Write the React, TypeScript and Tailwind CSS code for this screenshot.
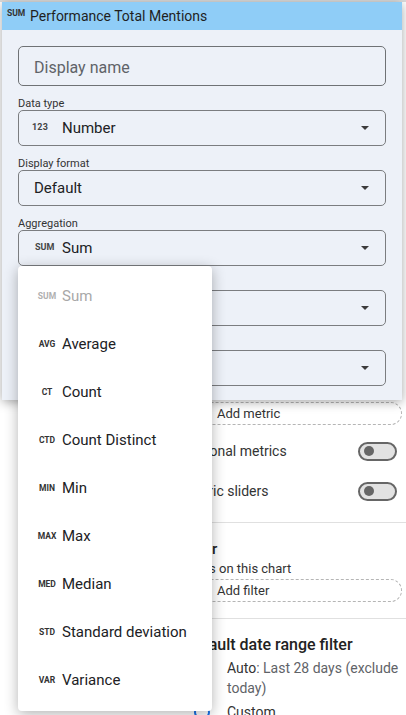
import React from "react";

const Arrow = () => (
  <svg width="8" height="4" viewBox="0 0 8 4" className="shrink-0">
    <path d="M0 0 L8 0 L4 4 Z" fill="#3c3c3c" />
  </svg>
);

const Toggle = () => (
  <div className="w-[39px] h-[19px] rounded-full border-2 border-[#666] bg-[#e2e2e2] flex items-center pl-[4px]">
    <div className="w-[10px] h-[10px] rounded-full bg-[#666]" />
  </div>
);

const Field = ({ label, children }: { label: string; children?: React.ReactNode }) => (
  <div className="flex flex-col mt-3">
    <div className="h-[12px] text-[11px] leading-[12px] text-[#333]">{label}</div>
    <div className="h-[36px] rounded-[5px] border border-[#7b7d80] flex items-center pr-[16px]">
      <div className="flex-1 flex items-center">{children}</div>
      <Arrow />
    </div>
  </div>
);

const items: [string, string][] = [
  ["SUM", "Sum"],
  ["AVG", "Average"],
  ["CT", "Count"],
  ["CTD", "Count Distinct"],
  ["MIN", "Min"],
  ["MAX", "Max"],
  ["MED", "Median"],
  ["STD", "Standard deviation"],
  ["VAR", "Variance"],
];

export default function App() {
  return (
    <div
      className="relative w-[406px] h-[715px] overflow-hidden bg-white"
      style={{ fontFamily: "Roboto, 'Noto Sans', sans-serif" }}
    >
      {/* top strip of the page underneath */}
      <div className="h-[2px] bg-[#dcdcdc]" />

      {/* background sidebar */}
      <div className="ml-[160px] flex flex-col pt-[400px]">
        <div className="pl-[24px] pr-[4px]">
          <div className="h-[23px] rounded-full border border-dashed border-[#b5b5b5] flex items-center pl-[10px] gap-[8px] text-[13px] text-[#333]">
            <span className="text-[14px] leading-none w-[14px] text-center">+</span>
            <span>Add metric</span>
          </div>
          <div className="mt-[6px] h-[40px] flex items-center justify-between pr-[5px] text-[14px] text-[#333]">
            <span>Optional metrics</span>
            <Toggle />
          </div>
          <div className="h-[40px] flex items-center justify-between pr-[5px] text-[14px] text-[#333]">
            <span>Metric sliders</span>
            <Toggle />
          </div>
        </div>
        <div className="mt-[11px] h-px bg-[#e0e0e0]" />
        <div className="pl-[20px] pr-[4px]">
          <div className="mt-[16px] ml-[3px] text-[15px] leading-[20px] font-medium text-[#222]">Filter</div>
          <div className="mt-[2px] text-[13px] leading-[16px] text-[#333]">Filters on this chart</div>
          <div className="mt-[2px] ml-[4px] h-[23px] rounded-full border border-dashed border-[#b5b5b5] flex items-center pl-[10px] gap-[8px] text-[13px] text-[#333]">
            <span className="text-[14px] leading-none w-[14px] text-center">+</span>
            <span>Add filter</span>
          </div>
        </div>
        <div className="mt-[16px] h-px bg-[#e0e0e0]" />
        <div className="pl-[24px] pr-[4px]">
          <div className="mt-[15px] text-[16px] leading-[22px] font-medium text-[#222]">Default date range filter</div>
          <div className="mt-[2px] flex items-start">
            <div className="ml-[8px] mt-[2px] w-[16px] h-[16px] rounded-full border-2 border-[#5f6368] shrink-0" />
            <div className="ml-[19px] text-[14px] leading-[20px] text-[#5f6368]">
              <span className="text-[#333]">Auto</span>: Last 28 days (exclude today)
            </div>
          </div>
          <div className="mt-[4px] flex items-start">
            <div className="ml-[10px] mt-[2px] w-[16px] h-[16px] rounded-full border-2 border-[#1a73e8] shrink-0" />
            <div className="ml-[17px] text-[14px] leading-[20px] text-[#333]">Custom</div>
          </div>
        </div>
      </div>

      {/* overlay panel */}
      <div className="absolute left-[2px] top-[2px] w-[400px] h-[398px] bg-[#edf1f8] shadow-[0_2px_10px_rgba(0,0,0,0.35)] flex flex-col">
        <div className="h-[28px] bg-[#8fcdf7] flex items-center">
          <span className="ml-[5px] w-[17px] text-[8.5px] font-bold text-[#333] self-start mt-[7px] leading-[8px]">SUM</span>
          <span className="ml-[6px] text-[14px] text-[#1f1f1f]">Performance Total Mentions</span>
        </div>
        <div className="px-[16px] pt-[16px] flex flex-col">
          <div className="h-[40px] rounded-[5px] border border-[#6f7275] flex items-center pl-[15px] pt-[3px] text-[16px] text-[#5f6368]">
            Display name
          </div>
          <Field label="Data type">
            <span className="ml-[13px] w-[16px] text-[9px] font-bold text-[#444] tracking-[0.2px]">123</span>
            <span className="ml-[14px] text-[15px] text-[#202124]">Number</span>
          </Field>
          <Field label="Display format">
            <span className="ml-[15px] text-[15px] text-[#202124]">Default</span>
          </Field>
          <Field label="Aggregation">
            <span className="ml-[16px] w-[18px] text-[9px] font-bold text-[#444]">SUM</span>
            <span className="ml-[9px] text-[15px] text-[#202124]">Sum</span>
          </Field>
          <Field label="Comparison calculation" />
          <Field label="Running calculation" />
        </div>
      </div>

      {/* dropdown menu */}
      <div className="absolute left-[18px] top-[266px] w-[194px] bg-white rounded-[4px] shadow-[0_3px_14px_rgba(0,0,0,0.3)] pt-[6px] pb-[7px]">
        {items.map(([abbr, label], i) => (
          <div key={abbr} className="h-[48px] flex items-center">
            <span
              className={`w-[22px] ml-[18px] text-center text-[8.5px] font-bold ${i === 0 ? "text-[#b0b0b0]" : "text-[#333]"}`}
            >
              {abbr}
            </span>
            <span className={`ml-[4px] text-[15px] ${i === 0 ? "text-[#a8a8a8]" : "text-[#202124]"}`}>{label}</span>
          </div>
        ))}
      </div>
    </div>
  );
}
